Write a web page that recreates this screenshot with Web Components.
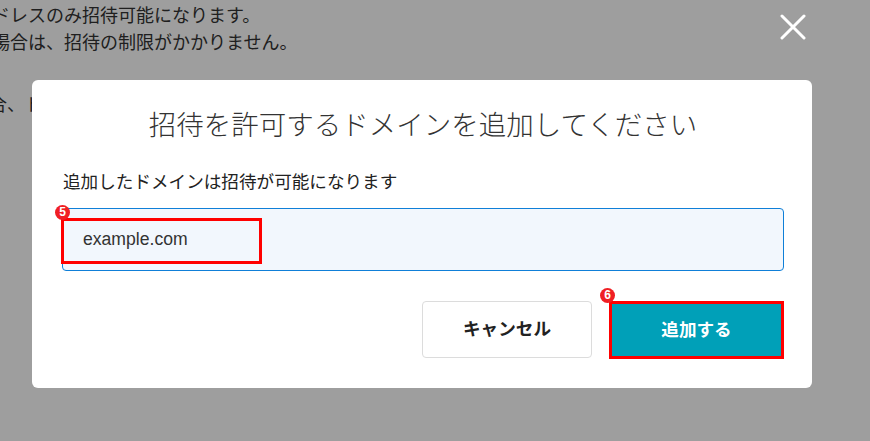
<!DOCTYPE html>
<html lang="ja">
<head>
<meta charset="utf-8">
<style>
html, body { margin: 0; height: 100%; }
body { font-family: "Noto Sans CJK JP", "Liberation Sans", sans-serif; color: #333; background: #fff; overflow: hidden; }
</style>
</head>
<body>
<help-page>
    <p>ドレスのみ招待可能になります。</p>
    <p>場合は、招待の制限がかかりません。</p>
    <p class="gap">場合、ドメイン</p>
</help-page>
<invite-dialog heading="招待を許可するドメインを追加してください" note="追加したドメインは招待が可能になります">
    <domain-field value="example.com"></domain-field>
    <action-button slot="actions" label="キャンセル"></action-button>
    <action-button slot="actions" label="追加する" primary></action-button>
</invite-dialog>

<script>
class HelpPage extends HTMLElement {
    constructor() {
        super();
        this.attachShadow({ mode: 'open' }).innerHTML = `
            <style>
                :host { display: block; font-size: 18px; line-height: 27px; white-space: nowrap; }
                .lines { margin-left: -8px; padding-top: 1px; }
                ::slotted(p) { margin: 0; }
                ::slotted(p.gap) { margin: 35px 0 0 -21px; }
            </style>
            <div class="lines"><slot></slot></div>
        `;
    }
}

class NoteBadge extends HTMLElement {
    constructor() {
        super();
        this.attachShadow({ mode: 'open' }).innerHTML = `
            <style>
                :host {
                    position: absolute; width: 15px; height: 15px; border-radius: 50%;
                    background: #f01f24; color: #fff; font: 700 12px/15px "Liberation Sans", sans-serif;
                    text-align: center; z-index: 2;
                }
            </style>
            <slot></slot>
        `;
    }
}

class DomainField extends HTMLElement {
    constructor() {
        super();
        this.attachShadow({ mode: 'open' }).innerHTML = `
            <style>
                :host { display: block; position: relative; }
                .input {
                    box-sizing: border-box; height: 63px; padding-left: 20px;
                    display: flex; align-items: center;
                    border: 1px solid #0f7fd8; border-radius: 4px; background: #f2f7fd;
                    font: 17.6px "Liberation Sans", sans-serif; color: #333;
                }
                .mark { position: absolute; left: -1px; top: 10px; width: 201px; height: 46px; box-sizing: border-box; border: 3px solid #f00; }
                note-badge { left: -7px; top: -3px; }
            </style>
            <div class="input"></div>
            <div class="mark"></div>
            <note-badge>5</note-badge>
        `;
        this.shadowRoot.querySelector('.input').textContent = this.getAttribute('value');
    }
}

class ActionButton extends HTMLElement {
    constructor() {
        super();
        this.attachShadow({ mode: 'open' }).innerHTML = `
            <style>
                :host { display: block; position: relative; }
                button {
                    display: block; box-sizing: border-box; width: 170px; height: 57px; padding: 0 0 4px;
                    border: 1px solid #dcdcdc; border-radius: 4px; background: #fff; color: #222;
                    font: 700 17.6px "Noto Sans CJK JP", sans-serif;
                }
                :host([primary]) button { width: 175px; height: 58px; border: 3px solid #f00; border-radius: 0; background: #00a0b8; color: #fff; }
                note-badge { left: -9px; top: -13px; }
            </style>
            <button type="button"></button>
        `;
        this.shadowRoot.querySelector('button').textContent = this.getAttribute('label');
        if (this.hasAttribute('primary')) {
            const badge = document.createElement('note-badge');
            badge.textContent = '6';
            this.shadowRoot.appendChild(badge);
        }
    }
}

class InviteDialog extends HTMLElement {
    constructor() {
        super();
        this.attachShadow({ mode: 'open' }).innerHTML = `
            <style>
                :host { position: fixed; inset: 0; display: block; background: rgba(0, 0, 0, .38); }
                .box {
                    box-sizing: border-box; width: 780px; height: 308px; margin: 80px 0 0 32px;
                    padding: 21px 28px 0 30px; background: #fff; border-radius: 6px; color: #333;
                }
                h2 { margin: 0; font-size: 27.5px; font-weight: 300; line-height: 44px; text-align: center; }
                p { margin: 24px 0 0 1px; font-size: 17.6px; line-height: 24px; color: #222; }
                .field { margin-top: 15px; }
                .actions { display: flex; justify-content: flex-end; gap: 17px; margin-top: 30px; }
                .close { position: absolute; left: 780px; top: 14px; width: 26px; height: 26px; }
            </style>
            <svg class="close" viewBox="0 0 26 26" aria-hidden="true">
                <path d="M2 2 L24 24 M24 2 L2 24" stroke="#fff" stroke-width="3" stroke-linecap="round" fill="none"/>
            </svg>
            <div class="box">
                <h2></h2>
                <p></p>
                <div class="field"><slot></slot></div>
                <div class="actions"><slot name="actions"></slot></div>
            </div>
        `;
        this.shadowRoot.querySelector('h2').textContent = this.getAttribute('heading');
        this.shadowRoot.querySelector('p').textContent = this.getAttribute('note');
    }
}

customElements.define('help-page', HelpPage);
customElements.define('note-badge', NoteBadge);
customElements.define('domain-field', DomainField);
customElements.define('action-button', ActionButton);
customElements.define('invite-dialog', InviteDialog);
</script>
</body>
</html>
